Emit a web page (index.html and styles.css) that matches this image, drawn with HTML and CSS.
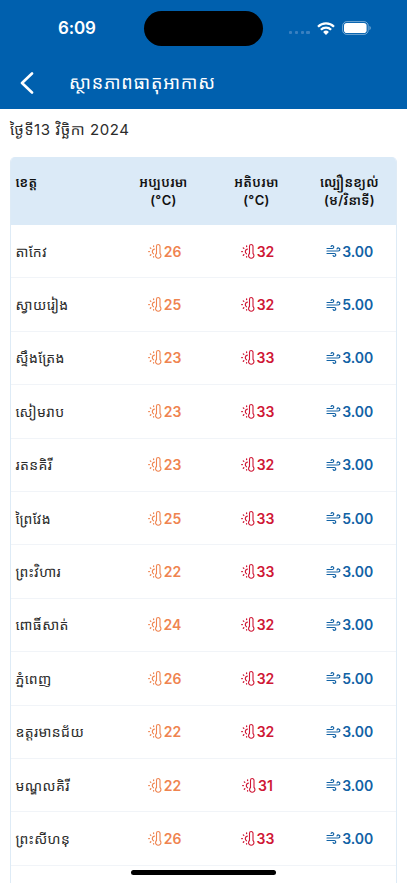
FILE: index.html
```html
<!DOCTYPE html>
<html lang="km">
<head>
<meta charset="utf-8">
<title>ស្ថានភាពធាតុអាកាស</title>
<link rel="stylesheet" href="styles.css">
</head>
<body>
<svg class="defs" aria-hidden="true">
  <symbol id="temp" viewBox="0 0 14 15">
    <g fill="none" stroke="currentColor" stroke-linecap="round">
      <path d="M8.5 9.5V2.3a1.75 1.75 0 0 1 3.5 0v7.2a2.7 2.7 0 1 1-3.5 0z" stroke-width="1.1"/>
      <path d="M6.4 5.2a2.5 2.5 0 0 0-.9 4.6" stroke-width="1.2"/>
      <path d="M.7 7.6h.7M2.3 3.9l.5.5M2.3 11.2l.5-.5M5.6 2v.6M5.6 12.6v.5" stroke-width="1.3"/>
    </g>
  </symbol>
  <symbol id="wind" viewBox="0 0 15 14">
    <g fill="none" stroke="currentColor" stroke-width="1.2" stroke-linecap="round">
      <path d="M1 4.5h5.4a1.4 1.4 0 1 0-1.3-2"/>
      <path d="M1 7h11.4a1.5 1.5 0 1 0-1.4-2.1"/>
      <path d="M1 9.5h7.4a1.4 1.4 0 1 1-1.3 2"/>
    </g>
  </symbol>
</svg>
<header class="top">
  <div class="status">
    <span class="clock">6:09</span>
    <span class="island"></span>
    <span class="signal"><i></i><i></i><i></i><i></i></span>
    <svg class="wifi" viewBox="0 0 18 13"><g fill="none" stroke="#fff" stroke-width="2.3"><path d="M1 4.7a11.4 11.4 0 0 1 16 0"/><path d="M3.9 7.7a7.2 7.2 0 0 1 10.2 0"/></g><path fill="#fff" d="M6.1 9.9a4.1 4.1 0 0 1 5.8 0L9 12.9z"/></svg>
    <svg class="battery" viewBox="0 0 30 14"><rect x=".6" y=".6" width="25.6" height="12.8" rx="4.2" fill="none" stroke="#fff" stroke-opacity=".45"/><rect x="2" y="2" width="22.6" height="10" rx="2.8" fill="#fff"/><path d="M27.5 4.8c1.7.7 1.7 3.7 0 4.4z" fill="#fff" fill-opacity=".5"/></svg>
  </div>
  <div class="bar">
    <svg class="back" viewBox="0 0 14 22"><path d="M12 1.5 2 11l10 9.5" fill="none" stroke="#fff" stroke-width="2.6" stroke-linecap="round" stroke-linejoin="round"/></svg>
    <h1>ស្ថានភាពធាតុអាកាស</h1>
  </div>
</header>
<main>
  <p class="date">ថ្ងៃទី13 វិច្ឆិកា 2024</p>
  <section class="table">
    <div class="row head"><span>ខេត្ត</span><span>អប្បបរមា<br>(°C)</span><span>អតិបរមា<br>(°C)</span><span>ល្បឿនខ្យល់<br>(ម/វិនាទី)</span></div>
    <div id="rows"></div>
  </section>
</main>
<div class="home"></div>
<script src="rows.js"></script>
</body>
</html>
```
FILE: styles.css
```css
* { box-sizing: border-box; }
body { margin: 0; height: 883px; overflow: hidden; background: #fff; color: #2b2b2b; font-family: Inter, "Noto Sans Khmer", "Noto Sans", sans-serif; position: relative; }
.defs { position: absolute; width: 0; height: 0; }
.top { height: 109px; background: #0060ae; color: #fff; }
.status { height: 56px; display: flex; align-items: center; padding-left: 58px; }
.clock { width: 86px; font-size: 17px; font-weight: 600; line-height: 20px; letter-spacing: -.2px; }
.island { width: 119px; height: 35px; border-radius: 18px; background: #000; }
.signal { display: flex; gap: 2.6px; margin: 9px 0 0 26px; width: 28px; }
.signal i { width: 3.2px; height: 3.2px; border-radius: 1px; background: #3a80c0; }
.wifi { width: 18px; height: 13px; }
.battery { width: 30px; height: 14px; margin-left: 7px; }
.bar { height: 53px; display: flex; align-items: center; padding-left: 20px; }
.back { width: 14px; height: 22px; }
h1 { margin: 0 0 0 35px; font-size: 18px; font-weight: 400; line-height: 24px; letter-spacing: .8px; white-space: nowrap; }
main { padding: 0 10px; }
.date { margin: 0; height: 48px; padding-top: 9px; font-size: 15px; line-height: 24px; letter-spacing: .6px; white-space: nowrap; }
.table { height: 740px; border: 1px solid #deebf6; border-width: 0 1px; border-radius: 5px 5px 0 0; overflow: hidden; }
.row { display: grid; grid-template-columns: 106px repeat(3, 93px); align-items: center; height: 53.4px; border-bottom: 1px solid #f1f4f8; text-align: center; font-size: 14px; }
.row > :first-child { text-align: left; padding-left: 4.5px; white-space: nowrap; letter-spacing: .4px; }
.head { height: 68px; background: #dbeaf7; border: 0; color: #111; font-size: 13px; font-weight: 600; line-height: 18px; letter-spacing: .35px; }
.head > :first-child { align-self: start; margin-top: 16px; }
.value { display: flex; align-items: center; justify-content: center; gap: 2px; padding-left: 2px; font-weight: 600; font-size: 14px; }
.value svg { width: 14px; height: 15px; }
.low { color: #ef8450; }
.high { color: #cf1735; }
.wind { color: #1262a5; padding-left: 0; gap: 1.5px; }
.wind svg { width: 15px; height: 14px; }
.home { position: absolute; left: 131px; top: 870px; width: 145px; height: 5px; border-radius: 3px; background: #000; }
```
FILE: rows.js
```js
const data = [
  ["តាកែវ", 26, 32, "3.00"],
  ["ស្វាយរៀង", 25, 32, "5.00"],
  ["ស្ទឹងត្រែង", 23, 33, "3.00"],
  ["សៀមរាប", 23, 33, "3.00"],
  ["រតនគិរី", 23, 32, "3.00"],
  ["ព្រៃវែង", 25, 33, "5.00"],
  ["ព្រះវិហារ", 22, 33, "3.00"],
  ["ពោធិ៍សាត់", 24, 32, "3.00"],
  ["ភ្នំពេញ", 26, 32, "5.00"],
  ["ឧត្តរមានជ័យ", 22, 32, "3.00"],
  ["មណ្ឌលគិរី", 22, 31, "3.00"],
  ["ព្រះសីហនុ", 26, 33, "3.00"]
];
const cell = (kind, icon, value) =>
  `<span class="value ${kind}"><svg><use href="#${icon}"/></svg>${value}</span>`;
document.getElementById("rows").innerHTML = data.map(([name, low, high, wind]) =>
  `<div class="row"><span>${name}</span>${cell("low", "temp", low)}${cell("high", "temp", high)}${cell("wind", "wind", wind)}</div>`
).join("");
```
